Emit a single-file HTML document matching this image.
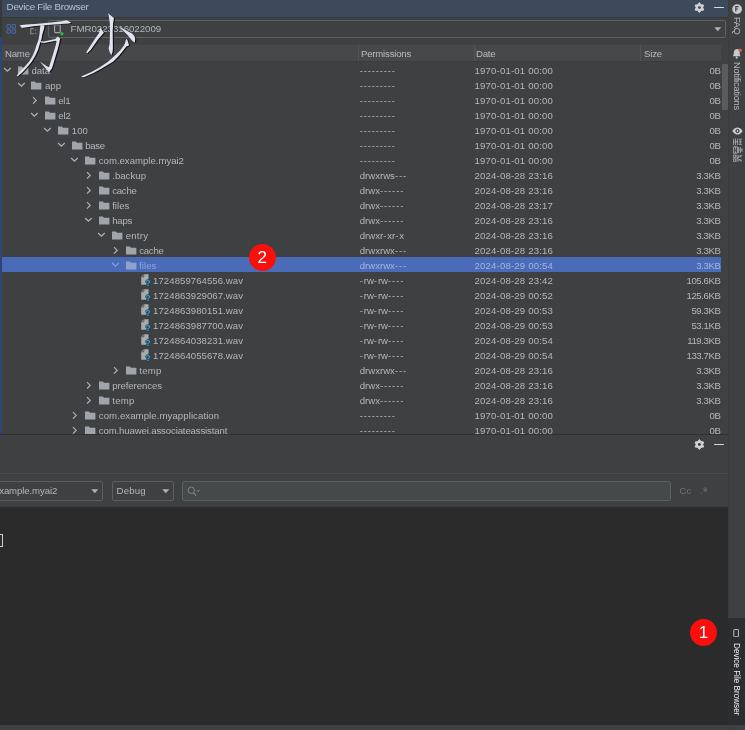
<!DOCTYPE html>
<html><head><meta charset="utf-8"><title>Device File Browser</title>
<style>
html,body{margin:0;padding:0;}
body{will-change:transform;width:745px;height:730px;overflow:hidden;background:#3e4042;position:relative;
 font-family:"Liberation Sans",sans-serif;font-size:9.6px;color:#b4b8bb;}
div,svg{position:absolute;}
.c{height:15px;line-height:17.0px;white-space:pre;color:#b4b8bb;}
.nm{letter-spacing:0px;}
.pm{letter-spacing:0px;}
.pm i{font-style:normal;letter-spacing:0.85px;}
.dash{letter-spacing:0.8px;}
.dt{letter-spacing:0.17px;}
.sz{text-align:right;letter-spacing:-0.4px;}
.sel{color:#a3b5e2;}
.sel.nm{color:#8ca3da;}
.selrow{left:2px;width:719px;height:15px;background:#4a6cb8;}
.ic{overflow:visible;}
#title{left:0;top:0;width:728px;height:17px;background:#3c4a5b;}
#title .t{left:6.6px;top:0;line-height:14.8px;height:16px;color:#b9c0cc;letter-spacing:-0.28px;font-size:9.8px;white-space:pre;}
#tb{left:0;top:17px;width:728px;height:27px;background:#3e4042;border-top:1px solid #35383a;box-sizing:border-box;}
#combo{left:48px;top:20px;width:678.4px;height:18px;box-sizing:border-box;border:1px solid #5e6162;border-radius:2px;background:#3e4042;}
#combo .t{left:21.5px;top:0;line-height:16.4px;height:16px;white-space:pre;letter-spacing:-0.02px;font-size:9.7px;color:#b4b8bb;}
#hdr{left:2px;top:44px;width:719px;height:18px;background:#46484a;box-sizing:border-box;border-top:1px solid #414345;border-bottom:1px solid #3a3c3e;}
#hdr .h{top:0;height:16px;line-height:18.4px;white-space:pre;color:#b8bcbf;letter-spacing:-0.2px;}
#hdr .sep{top:0px;width:1px;height:16px;background:#525456;}
#leftstrip{left:0;top:0;width:1.7px;height:434px;background:#2d4474;}
#leftstrip2{left:0;top:0;width:1.7px;height:36.5px;background:#343a3c;}
#rstrip{left:728px;top:0;width:17px;height:730px;background:#3e4042;border-left:1px solid #3a3c3e;box-sizing:border-box;}
.vt{white-space:pre;transform-origin:0 0;transform:rotate(90deg);color:#b9bcbf;font-size:9.3px;line-height:12px;height:12px;}
#vscroll{left:721px;top:44px;width:7px;height:390px;background:#3f4143;}
#vthumb{left:722.4px;top:63.5px;width:5.4px;height:46.5px;background:#595b5d;border-radius:1px;}
#p2{left:0;top:434px;width:729px;height:296px;background:#3e4042;border-top:1px solid #2f3133;box-sizing:border-box;}
#p2line{left:0;top:473px;width:729px;height:1px;background:#484b4d;}
#console{left:0;top:507.4px;width:729px;height:217.6px;background:#2b2b2b;}
.cb{box-sizing:border-box;border:1px solid #5b5e60;border-radius:2px;height:20px;top:481px;background:#3e4042;}
.cb .t{top:0;height:18px;line-height:18.6px;white-space:pre;color:#b4b8bb;letter-spacing:-0.1px;}
#search{left:182px;top:481px;width:489px;height:20px;box-sizing:border-box;border:1px solid #5a6261;border-radius:2px;background:#45494a;}
#bottombar{left:0;top:725px;width:729px;height:5px;background:#3f4143;}
.badge{width:27.2px;height:27.2px;border-radius:14px;background:#fb0f0c;color:#fff;text-align:center;font-size:17px;line-height:27.6px;}
#dfbtab{left:728px;top:617.5px;width:17px;height:107.5px;background:#2c2d2e;}
</style></head>
<body>
<div id="title"><div class="t">Device File Browser</div>
 <svg style="left:0;top:0" width="745" height="730" viewBox="0 0 745 730"><path d="M699.40 2.60 L701.07 4.70 L703.73 5.10 L702.75 7.60 L703.73 10.10 L701.07 10.50 L699.40 12.60 L697.73 10.50 L695.07 10.10 L696.05 7.60 L695.07 5.10 L697.73 4.70Z" fill="#cfd1d3" stroke="#cfd1d3" stroke-width="0.9" stroke-linejoin="round"/><circle cx="699.4" cy="7.6" r="1.45" fill="#3c4a5b"/></svg>
 <div style="left:714.4px;top:6.8px;width:9.3px;height:1.7px;background:#d6d8da;border-radius:0.6px"></div>
</div>
<div id="tb"></div>
<svg style="left:5.8px;top:24px" width="10.4" height="9.8" viewBox="0 0 13 13"><g fill="none" stroke="#4c71ba" stroke-width="1.15"><rect x="0.8" y="0.8" width="4.6" height="4.6" rx="0.25"/><rect x="7.6" y="0.8" width="4.6" height="4.6" rx="0.25"/><rect x="0.8" y="7.6" width="4.6" height="4.6" rx="0.25"/><rect x="7.6" y="7.6" width="4.6" height="4.6" rx="0.25"/></g></svg>
<svg style="left:29.8px;top:27.6px" width="8" height="7" viewBox="0 0 8 7"><path d="M3.9 0.6H0.8v5.2h3.1" fill="none" stroke="#8a8e92" stroke-width="1.1"/><rect x="5.2" y="1.6" width="1.1" height="1.2" fill="#8a8e92"/><rect x="5.2" y="4.8" width="1.1" height="1.2" fill="#8a8e92"/></svg>
<div id="combo">
 <svg style="left:5px;top:2.9px" width="12" height="13" viewBox="0 0 12 13"><rect x="0.6" y="0.6" width="5.6" height="8.0" rx="0.8" fill="none" stroke="#9ea4a8" stroke-width="1.1"/><circle cx="7.9" cy="9.7" r="1.75" fill="#2fbf3a" stroke="#256f2c" stroke-width="0.5"/></svg>
 <div class="t">FMR0223316022009</div>
 <svg style="left:665px;top:6px" width="8" height="5" viewBox="0 0 8 5"><path d="M0.3 0.3h7L3.8 4.2z" fill="#aeb2b5"/></svg>
</div>
<div id="hdr">
 <div class="h" style="left:3px">Name</div>
 <div class="sep" style="left:356px"></div><div class="h" style="left:359px">Permissions</div>
 <div class="sep" style="left:471.6px"></div><div class="h" style="left:474px">Date</div>
 <div class="sep" style="left:638px"></div><div class="h" style="left:642px">Size</div>
</div>
<div id="vscroll"></div><div id="vthumb"></div>
<svg class="ic" style="left:3.0px;top:66.7px" width="9" height="6" viewBox="0 0 9 6"><path d="M1.1 1 4.4 4.2 7.7 1" fill="none" stroke="#b0b4b8" stroke-width="1.2"/></svg>
<svg class="ic" style="left:17.9px;top:65.7px" width="10.6" height="8.7" viewBox="0 0 11 9"><path d="M0 0.4h3.9l1.3 1.5h5.6v6.9h-10.8z" fill="#9fa5aa"/></svg>
<div class="c nm" style="left:31.4px;top:62px;letter-spacing:0.0px">data</div>
<div class="c pm dash" style="left:359.7px;top:62px">---------</div>
<div class="c dt" style="left:474.6px;top:62px">1970-01-01 00:00</div>
<div class="c sz" style="left:640px;width:80.5px;top:62px">0B</div>
<svg class="ic" style="left:16.5px;top:81.7px" width="9" height="6" viewBox="0 0 9 6"><path d="M1.1 1 4.4 4.2 7.7 1" fill="none" stroke="#b0b4b8" stroke-width="1.2"/></svg>
<svg class="ic" style="left:31.4px;top:80.7px" width="10.6" height="8.7" viewBox="0 0 11 9"><path d="M0 0.4h3.9l1.3 1.5h5.6v6.9h-10.8z" fill="#9fa5aa"/></svg>
<div class="c nm" style="left:44.9px;top:77px;letter-spacing:0.09px">app</div>
<div class="c pm dash" style="left:359.7px;top:77px">---------</div>
<div class="c dt" style="left:474.6px;top:77px">1970-01-01 00:00</div>
<div class="c sz" style="left:640px;width:80.5px;top:77px">0B</div>
<svg class="ic" style="left:31.7px;top:95.8px" width="6" height="9" viewBox="0 0 6 9"><path d="M1 1.1 4.2 4.4 1 7.7" fill="none" stroke="#b0b4b8" stroke-width="1.2"/></svg>
<svg class="ic" style="left:44.8px;top:95.7px" width="10.6" height="8.7" viewBox="0 0 11 9"><path d="M0 0.4h3.9l1.3 1.5h5.6v6.9h-10.8z" fill="#9fa5aa"/></svg>
<div class="c nm" style="left:58.3px;top:92px;letter-spacing:-0.3px">el1</div>
<div class="c pm dash" style="left:359.7px;top:92px">---------</div>
<div class="c dt" style="left:474.6px;top:92px">1970-01-01 00:00</div>
<div class="c sz" style="left:640px;width:80.5px;top:92px">0B</div>
<svg class="ic" style="left:29.9px;top:111.7px" width="9" height="6" viewBox="0 0 9 6"><path d="M1.1 1 4.4 4.2 7.7 1" fill="none" stroke="#b0b4b8" stroke-width="1.2"/></svg>
<svg class="ic" style="left:44.8px;top:110.7px" width="10.6" height="8.7" viewBox="0 0 11 9"><path d="M0 0.4h3.9l1.3 1.5h5.6v6.9h-10.8z" fill="#9fa5aa"/></svg>
<div class="c nm" style="left:58.3px;top:107px;letter-spacing:-0.1px">el2</div>
<div class="c pm dash" style="left:359.7px;top:107px">---------</div>
<div class="c dt" style="left:474.6px;top:107px">1970-01-01 00:00</div>
<div class="c sz" style="left:640px;width:80.5px;top:107px">0B</div>
<svg class="ic" style="left:43.4px;top:126.7px" width="9" height="6" viewBox="0 0 9 6"><path d="M1.1 1 4.4 4.2 7.7 1" fill="none" stroke="#b0b4b8" stroke-width="1.2"/></svg>
<svg class="ic" style="left:58.3px;top:125.7px" width="10.6" height="8.7" viewBox="0 0 11 9"><path d="M0 0.4h3.9l1.3 1.5h5.6v6.9h-10.8z" fill="#9fa5aa"/></svg>
<div class="c nm" style="left:71.8px;top:122px;letter-spacing:0.03px">100</div>
<div class="c pm dash" style="left:359.7px;top:122px">---------</div>
<div class="c dt" style="left:474.6px;top:122px">1970-01-01 00:00</div>
<div class="c sz" style="left:640px;width:80.5px;top:122px">0B</div>
<svg class="ic" style="left:56.9px;top:141.7px" width="9" height="6" viewBox="0 0 9 6"><path d="M1.1 1 4.4 4.2 7.7 1" fill="none" stroke="#b0b4b8" stroke-width="1.2"/></svg>
<svg class="ic" style="left:71.8px;top:140.7px" width="10.6" height="8.7" viewBox="0 0 11 9"><path d="M0 0.4h3.9l1.3 1.5h5.6v6.9h-10.8z" fill="#9fa5aa"/></svg>
<div class="c nm" style="left:85.3px;top:137px;letter-spacing:-0.33px">base</div>
<div class="c pm dash" style="left:359.7px;top:137px">---------</div>
<div class="c dt" style="left:474.6px;top:137px">1970-01-01 00:00</div>
<div class="c sz" style="left:640px;width:80.5px;top:137px">0B</div>
<svg class="ic" style="left:70.4px;top:156.7px" width="9" height="6" viewBox="0 0 9 6"><path d="M1.1 1 4.4 4.2 7.7 1" fill="none" stroke="#b0b4b8" stroke-width="1.2"/></svg>
<svg class="ic" style="left:85.2px;top:155.7px" width="10.6" height="8.7" viewBox="0 0 11 9"><path d="M0 0.4h3.9l1.3 1.5h5.6v6.9h-10.8z" fill="#9fa5aa"/></svg>
<div class="c nm" style="left:98.8px;top:152px;letter-spacing:-0.01px">com.example.myai2</div>
<div class="c pm dash" style="left:359.7px;top:152px">---------</div>
<div class="c dt" style="left:474.6px;top:152px">1970-01-01 00:00</div>
<div class="c sz" style="left:640px;width:80.5px;top:152px">0B</div>
<svg class="ic" style="left:85.6px;top:170.8px" width="6" height="9" viewBox="0 0 6 9"><path d="M1 1.1 4.2 4.4 1 7.7" fill="none" stroke="#b0b4b8" stroke-width="1.2"/></svg>
<svg class="ic" style="left:98.7px;top:170.7px" width="10.6" height="8.7" viewBox="0 0 11 9"><path d="M0 0.4h3.9l1.3 1.5h5.6v6.9h-10.8z" fill="#9fa5aa"/></svg>
<div class="c nm" style="left:112.2px;top:167px;letter-spacing:0.03px">.backup</div>
<div class="c pm" style="left:359.7px;top:167px">drwxrws<i>-</i><i>-</i><i>-</i></div>
<div class="c dt" style="left:474.6px;top:167px">2024-08-28 23:16</div>
<div class="c sz" style="left:640px;width:80.5px;top:167px">3.3KB</div>
<svg class="ic" style="left:85.6px;top:185.8px" width="6" height="9" viewBox="0 0 6 9"><path d="M1 1.1 4.2 4.4 1 7.7" fill="none" stroke="#b0b4b8" stroke-width="1.2"/></svg>
<svg class="ic" style="left:98.7px;top:185.7px" width="10.6" height="8.7" viewBox="0 0 11 9"><path d="M0 0.4h3.9l1.3 1.5h5.6v6.9h-10.8z" fill="#9fa5aa"/></svg>
<div class="c nm" style="left:112.2px;top:182px;letter-spacing:-0.24px">cache</div>
<div class="c pm" style="left:359.7px;top:182px">drwx<i>-</i><i>-</i><i>-</i><i>-</i><i>-</i><i>-</i></div>
<div class="c dt" style="left:474.6px;top:182px">2024-08-28 23:16</div>
<div class="c sz" style="left:640px;width:80.5px;top:182px">3.3KB</div>
<svg class="ic" style="left:85.6px;top:200.8px" width="6" height="9" viewBox="0 0 6 9"><path d="M1 1.1 4.2 4.4 1 7.7" fill="none" stroke="#b0b4b8" stroke-width="1.2"/></svg>
<svg class="ic" style="left:98.7px;top:200.7px" width="10.6" height="8.7" viewBox="0 0 11 9"><path d="M0 0.4h3.9l1.3 1.5h5.6v6.9h-10.8z" fill="#9fa5aa"/></svg>
<div class="c nm" style="left:112.2px;top:197px;letter-spacing:0.01px">files</div>
<div class="c pm" style="left:359.7px;top:197px">drwx<i>-</i><i>-</i><i>-</i><i>-</i><i>-</i><i>-</i></div>
<div class="c dt" style="left:474.6px;top:197px">2024-08-28 23:17</div>
<div class="c sz" style="left:640px;width:80.5px;top:197px">3.3KB</div>
<svg class="ic" style="left:83.8px;top:216.7px" width="9" height="6" viewBox="0 0 9 6"><path d="M1.1 1 4.4 4.2 7.7 1" fill="none" stroke="#b0b4b8" stroke-width="1.2"/></svg>
<svg class="ic" style="left:98.7px;top:215.7px" width="10.6" height="8.7" viewBox="0 0 11 9"><path d="M0 0.4h3.9l1.3 1.5h5.6v6.9h-10.8z" fill="#9fa5aa"/></svg>
<div class="c nm" style="left:112.2px;top:212px;letter-spacing:-0.2px">haps</div>
<div class="c pm" style="left:359.7px;top:212px">drwx<i>-</i><i>-</i><i>-</i><i>-</i><i>-</i><i>-</i></div>
<div class="c dt" style="left:474.6px;top:212px">2024-08-28 23:16</div>
<div class="c sz" style="left:640px;width:80.5px;top:212px">3.3KB</div>
<svg class="ic" style="left:97.3px;top:231.7px" width="9" height="6" viewBox="0 0 9 6"><path d="M1.1 1 4.4 4.2 7.7 1" fill="none" stroke="#b0b4b8" stroke-width="1.2"/></svg>
<svg class="ic" style="left:112.2px;top:230.7px" width="10.6" height="8.7" viewBox="0 0 11 9"><path d="M0 0.4h3.9l1.3 1.5h5.6v6.9h-10.8z" fill="#9fa5aa"/></svg>
<div class="c nm" style="left:125.7px;top:227px;letter-spacing:0.23px">entry</div>
<div class="c pm" style="left:359.7px;top:227px">drwxr<i>-</i>xr<i>-</i>x</div>
<div class="c dt" style="left:474.6px;top:227px">2024-08-28 23:16</div>
<div class="c sz" style="left:640px;width:80.5px;top:227px">3.3KB</div>
<svg class="ic" style="left:112.6px;top:245.8px" width="6" height="9" viewBox="0 0 6 9"><path d="M1 1.1 4.2 4.4 1 7.7" fill="none" stroke="#b0b4b8" stroke-width="1.2"/></svg>
<svg class="ic" style="left:125.7px;top:245.7px" width="10.6" height="8.7" viewBox="0 0 11 9"><path d="M0 0.4h3.9l1.3 1.5h5.6v6.9h-10.8z" fill="#9fa5aa"/></svg>
<div class="c nm" style="left:139.2px;top:242px;letter-spacing:-0.24px">cache</div>
<div class="c pm" style="left:359.7px;top:242px">drwxrwx<i>-</i><i>-</i><i>-</i></div>
<div class="c dt" style="left:474.6px;top:242px">2024-08-28 23:16</div>
<div class="c sz" style="left:640px;width:80.5px;top:242px">3.3KB</div>
<div class="selrow" style="top:257px"></div>
<svg class="ic" style="left:110.8px;top:261.7px" width="9" height="6" viewBox="0 0 9 6"><path d="M1.1 1 4.4 4.2 7.7 1" fill="none" stroke="#7f9fe0" stroke-width="1.2"/></svg>
<svg class="ic" style="left:125.7px;top:260.7px" width="10.6" height="8.7" viewBox="0 0 11 9"><path d="M0 0.4h3.9l1.3 1.5h5.6v6.9h-10.8z" fill="#8fa3c8"/></svg>
<div class="c sel nm" style="left:139.2px;top:257px;letter-spacing:0.01px">files</div>
<div class="c sel pm" style="left:359.7px;top:257px">drwxrwx<i>-</i><i>-</i><i>-</i></div>
<div class="c sel dt" style="left:474.6px;top:257px">2024-08-29 00:54</div>
<div class="c sel sz" style="left:640px;width:80.5px;top:257px">3.3KB</div>
<svg class="ic" style="left:140.3px;top:274.4px" width="13" height="12" viewBox="0 0 13 12"><path d="M1.2 2.8 3.8 0.3h4.7v6.2h-2v4.3H1.2z" fill="#a6abaf"/><path d="M1.2 2.8h2.6V0.3" fill="none" stroke="#3c3f41" stroke-width="0.7"/><text x="5.6" y="11.7" font-family="Liberation Sans" font-weight="bold" font-size="8.5" fill="#39a3db" stroke="#23414f" stroke-width="1.3" paint-order="stroke">?</text></svg>
<div class="c nm" style="left:153.1px;top:272px;letter-spacing:0.05px">1724859764556.wav</div>
<div class="c pm" style="left:359.7px;top:272px"><i>-</i>rw<i>-</i>rw<i>-</i><i>-</i><i>-</i><i>-</i></div>
<div class="c dt" style="left:474.6px;top:272px">2024-08-28 23:42</div>
<div class="c sz" style="left:640px;width:80.5px;top:272px">105.6KB</div>
<svg class="ic" style="left:140.3px;top:289.4px" width="13" height="12" viewBox="0 0 13 12"><path d="M1.2 2.8 3.8 0.3h4.7v6.2h-2v4.3H1.2z" fill="#a6abaf"/><path d="M1.2 2.8h2.6V0.3" fill="none" stroke="#3c3f41" stroke-width="0.7"/><text x="5.6" y="11.7" font-family="Liberation Sans" font-weight="bold" font-size="8.5" fill="#39a3db" stroke="#23414f" stroke-width="1.3" paint-order="stroke">?</text></svg>
<div class="c nm" style="left:153.1px;top:287px;letter-spacing:0.05px">1724863929067.wav</div>
<div class="c pm" style="left:359.7px;top:287px"><i>-</i>rw<i>-</i>rw<i>-</i><i>-</i><i>-</i><i>-</i></div>
<div class="c dt" style="left:474.6px;top:287px">2024-08-29 00:52</div>
<div class="c sz" style="left:640px;width:80.5px;top:287px">125.6KB</div>
<svg class="ic" style="left:140.3px;top:304.4px" width="13" height="12" viewBox="0 0 13 12"><path d="M1.2 2.8 3.8 0.3h4.7v6.2h-2v4.3H1.2z" fill="#a6abaf"/><path d="M1.2 2.8h2.6V0.3" fill="none" stroke="#3c3f41" stroke-width="0.7"/><text x="5.6" y="11.7" font-family="Liberation Sans" font-weight="bold" font-size="8.5" fill="#39a3db" stroke="#23414f" stroke-width="1.3" paint-order="stroke">?</text></svg>
<div class="c nm" style="left:153.1px;top:302px;letter-spacing:0.05px">1724863980151.wav</div>
<div class="c pm" style="left:359.7px;top:302px"><i>-</i>rw<i>-</i>rw<i>-</i><i>-</i><i>-</i><i>-</i></div>
<div class="c dt" style="left:474.6px;top:302px">2024-08-29 00:53</div>
<div class="c sz" style="left:640px;width:80.5px;top:302px">59.3KB</div>
<svg class="ic" style="left:140.3px;top:319.4px" width="13" height="12" viewBox="0 0 13 12"><path d="M1.2 2.8 3.8 0.3h4.7v6.2h-2v4.3H1.2z" fill="#a6abaf"/><path d="M1.2 2.8h2.6V0.3" fill="none" stroke="#3c3f41" stroke-width="0.7"/><text x="5.6" y="11.7" font-family="Liberation Sans" font-weight="bold" font-size="8.5" fill="#39a3db" stroke="#23414f" stroke-width="1.3" paint-order="stroke">?</text></svg>
<div class="c nm" style="left:153.1px;top:317px;letter-spacing:0.05px">1724863987700.wav</div>
<div class="c pm" style="left:359.7px;top:317px"><i>-</i>rw<i>-</i>rw<i>-</i><i>-</i><i>-</i><i>-</i></div>
<div class="c dt" style="left:474.6px;top:317px">2024-08-29 00:53</div>
<div class="c sz" style="left:640px;width:80.5px;top:317px">53.1KB</div>
<svg class="ic" style="left:140.3px;top:334.4px" width="13" height="12" viewBox="0 0 13 12"><path d="M1.2 2.8 3.8 0.3h4.7v6.2h-2v4.3H1.2z" fill="#a6abaf"/><path d="M1.2 2.8h2.6V0.3" fill="none" stroke="#3c3f41" stroke-width="0.7"/><text x="5.6" y="11.7" font-family="Liberation Sans" font-weight="bold" font-size="8.5" fill="#39a3db" stroke="#23414f" stroke-width="1.3" paint-order="stroke">?</text></svg>
<div class="c nm" style="left:153.1px;top:332px;letter-spacing:0.05px">1724864038231.wav</div>
<div class="c pm" style="left:359.7px;top:332px"><i>-</i>rw<i>-</i>rw<i>-</i><i>-</i><i>-</i><i>-</i></div>
<div class="c dt" style="left:474.6px;top:332px">2024-08-29 00:54</div>
<div class="c sz" style="left:640px;width:80.5px;top:332px">119.3KB</div>
<svg class="ic" style="left:140.3px;top:349.4px" width="13" height="12" viewBox="0 0 13 12"><path d="M1.2 2.8 3.8 0.3h4.7v6.2h-2v4.3H1.2z" fill="#a6abaf"/><path d="M1.2 2.8h2.6V0.3" fill="none" stroke="#3c3f41" stroke-width="0.7"/><text x="5.6" y="11.7" font-family="Liberation Sans" font-weight="bold" font-size="8.5" fill="#39a3db" stroke="#23414f" stroke-width="1.3" paint-order="stroke">?</text></svg>
<div class="c nm" style="left:153.1px;top:347px;letter-spacing:0.05px">1724864055678.wav</div>
<div class="c pm" style="left:359.7px;top:347px"><i>-</i>rw<i>-</i>rw<i>-</i><i>-</i><i>-</i><i>-</i></div>
<div class="c dt" style="left:474.6px;top:347px">2024-08-29 00:54</div>
<div class="c sz" style="left:640px;width:80.5px;top:347px">133.7KB</div>
<svg class="ic" style="left:112.6px;top:365.9px" width="6" height="9" viewBox="0 0 6 9"><path d="M1 1.1 4.2 4.4 1 7.7" fill="none" stroke="#b0b4b8" stroke-width="1.2"/></svg>
<svg class="ic" style="left:125.7px;top:365.7px" width="10.6" height="8.7" viewBox="0 0 11 9"><path d="M0 0.4h3.9l1.3 1.5h5.6v6.9h-10.8z" fill="#9fa5aa"/></svg>
<div class="c nm" style="left:139.2px;top:362px;letter-spacing:0.29px">temp</div>
<div class="c pm" style="left:359.7px;top:362px">drwxrwx<i>-</i><i>-</i><i>-</i></div>
<div class="c dt" style="left:474.6px;top:362px">2024-08-28 23:16</div>
<div class="c sz" style="left:640px;width:80.5px;top:362px">3.3KB</div>
<svg class="ic" style="left:85.6px;top:380.9px" width="6" height="9" viewBox="0 0 6 9"><path d="M1 1.1 4.2 4.4 1 7.7" fill="none" stroke="#b0b4b8" stroke-width="1.2"/></svg>
<svg class="ic" style="left:98.7px;top:380.7px" width="10.6" height="8.7" viewBox="0 0 11 9"><path d="M0 0.4h3.9l1.3 1.5h5.6v6.9h-10.8z" fill="#9fa5aa"/></svg>
<div class="c nm" style="left:112.2px;top:377px;letter-spacing:-0.09px">preferences</div>
<div class="c pm" style="left:359.7px;top:377px">drwx<i>-</i><i>-</i><i>-</i><i>-</i><i>-</i><i>-</i></div>
<div class="c dt" style="left:474.6px;top:377px">2024-08-28 23:16</div>
<div class="c sz" style="left:640px;width:80.5px;top:377px">3.3KB</div>
<svg class="ic" style="left:85.6px;top:395.9px" width="6" height="9" viewBox="0 0 6 9"><path d="M1 1.1 4.2 4.4 1 7.7" fill="none" stroke="#b0b4b8" stroke-width="1.2"/></svg>
<svg class="ic" style="left:98.7px;top:395.7px" width="10.6" height="8.7" viewBox="0 0 11 9"><path d="M0 0.4h3.9l1.3 1.5h5.6v6.9h-10.8z" fill="#9fa5aa"/></svg>
<div class="c nm" style="left:112.2px;top:392px;letter-spacing:0.29px">temp</div>
<div class="c pm" style="left:359.7px;top:392px">drwx<i>-</i><i>-</i><i>-</i><i>-</i><i>-</i><i>-</i></div>
<div class="c dt" style="left:474.6px;top:392px">2024-08-28 23:16</div>
<div class="c sz" style="left:640px;width:80.5px;top:392px">3.3KB</div>
<svg class="ic" style="left:72.2px;top:410.9px" width="6" height="9" viewBox="0 0 6 9"><path d="M1 1.1 4.2 4.4 1 7.7" fill="none" stroke="#b0b4b8" stroke-width="1.2"/></svg>
<svg class="ic" style="left:85.2px;top:410.7px" width="10.6" height="8.7" viewBox="0 0 11 9"><path d="M0 0.4h3.9l1.3 1.5h5.6v6.9h-10.8z" fill="#9fa5aa"/></svg>
<div class="c nm" style="left:98.8px;top:407px;letter-spacing:0.08px">com.example.myapplication</div>
<div class="c pm dash" style="left:359.7px;top:407px">---------</div>
<div class="c dt" style="left:474.6px;top:407px">1970-01-01 00:00</div>
<div class="c sz" style="left:640px;width:80.5px;top:407px">0B</div>
<svg class="ic" style="left:72.2px;top:425.9px" width="6" height="9" viewBox="0 0 6 9"><path d="M1 1.1 4.2 4.4 1 7.7" fill="none" stroke="#b0b4b8" stroke-width="1.2"/></svg>
<svg class="ic" style="left:85.2px;top:425.7px" width="10.6" height="8.7" viewBox="0 0 11 9"><path d="M0 0.4h3.9l1.3 1.5h5.6v6.9h-10.8z" fill="#9fa5aa"/></svg>
<div class="c nm" style="left:98.8px;top:422px;letter-spacing:-0.13px">com.huawei.associateassistant</div>
<div class="c pm dash" style="left:359.7px;top:422px">---------</div>
<div class="c dt" style="left:474.6px;top:422px">1970-01-01 00:00</div>
<div class="c sz" style="left:640px;width:80.5px;top:422px">0B</div>
<div id="leftstrip"></div><div id="leftstrip2"></div>

<div id="p2"></div>
<div id="p2line"></div>
<div id="console"></div>
<div id="bottombar"></div>
<svg style="left:0;top:0" width="745" height="730" viewBox="0 0 745 730"><path d="M699.40 439.50 L701.07 441.60 L703.73 442.00 L702.75 444.50 L703.73 447.00 L701.07 447.40 L699.40 449.50 L697.73 447.40 L695.07 447.00 L696.05 444.50 L695.07 442.00 L697.73 441.60Z" fill="#cfd1d3" stroke="#cfd1d3" stroke-width="0.9" stroke-linejoin="round"/><circle cx="699.4" cy="444.5" r="1.45" fill="#3d3f41"/></svg>
<div style="left:714.4px;top:443.7px;width:9.3px;height:1.7px;background:#d6d8da;border-radius:0.6px"></div>
<div class="cb" style="left:-20px;width:122.5px"><div class="t" style="left:18.2px">xample.myai2</div>
 <svg style="left:110px;top:7px" width="8" height="5" viewBox="0 0 8 5"><path d="M0.3 0.3h7L3.8 4.2z" fill="#aeb2b5"/></svg></div>
<div class="cb" style="left:112px;width:61.5px"><div class="t" style="left:3.6px;letter-spacing:0.15px">Debug</div>
 <svg style="left:49px;top:7px" width="8" height="5" viewBox="0 0 8 5"><path d="M0.3 0.3h7L3.8 4.2z" fill="#aeb2b5"/></svg></div>
<div id="search">
 <svg style="left:3.5px;top:3.5px" width="14" height="11" viewBox="0 0 14 11"><circle cx="4.3" cy="4.3" r="3.2" fill="none" stroke="#7e8689" stroke-width="1"/><path d="M6.6 6.8 9 9.6" stroke="#7e8689" stroke-width="1.1"/><path d="M9.6 4.2h3.2l-1.6 1.9z" fill="#7e8689"/></svg>
</div>
<div style="left:679.4px;top:484px;font-size:9.6px;line-height:14px;color:#6e7376;white-space:pre;letter-spacing:0.2px">Cc</div>
<div style="left:699.8px;top:484px;font-size:9.6px;line-height:14px;color:#6b7073;white-space:pre">.</div><div style="left:702.4px;top:483.6px;font-size:14px;line-height:17px;color:#6b7073;white-space:pre">*</div>
<div style="left:0;top:533.6px;width:3.2px;height:13.4px;border:1.1px solid #cfcfcf;border-left:none;box-sizing:border-box;background:#283033"></div>

<div id="rstrip"></div>
<div id="dfbtab"></div>
<!-- right strip contents -->
<svg style="left:731.8px;top:3.9px" width="10.2" height="10.2" viewBox="0 0 10 10"><circle cx="5" cy="5" r="4.8" fill="#c7cbcf"/><path d="M3.7 7.4V2.6h2.8M3.7 4.9h2.2" fill="none" stroke="#3c3f41" stroke-width="1.1"/></svg>
<div class="vt" style="left:743.2px;top:16.9px;letter-spacing:-0.45px">FAQ</div>
<svg style="left:732px;top:48px" width="11" height="12" viewBox="0 0 11 12"><path d="M4.3 1.6C2.4 2 1.9 3.6 1.9 5.2L1 8.2h7.4L7.6 5.2" fill="#c7cbcf"/><path d="M4.3 1.2a2.6 2.6 0 0 1 3.2 3.9H1.9C1.9 3.4 2.6 1.6 4.3 1.2z" fill="#c7cbcf"/><circle cx="4.7" cy="9.6" r="1.1" fill="#c7cbcf"/><circle cx="8.3" cy="2.3" r="1.7" fill="#e0524b"/></svg>
<div class="vt" style="left:743px;top:61.6px;letter-spacing:-0.2px">Notifications</div>
<svg style="left:731.5px;top:126.5px" width="11" height="8" viewBox="0 0 11 8"><path d="M0.3 4C2 1.2 3.8 0.4 5.5 0.4S9 1.2 10.7 4C9 6.8 7.2 7.6 5.5 7.6S2 6.8 0.3 4z" fill="#c7cbcf"/><circle cx="5.5" cy="4" r="2.1" fill="#3c3f41"/><circle cx="5.5" cy="4" r="0.9" fill="#c7cbcf"/></svg>
<svg style="left:732.6px;top:138.2px" width="10" height="25" viewBox="0 0 10 25"><g fill="none" stroke="#b3b6b9" stroke-width="0.95" opacity="0.85"><path transform="translate(0,0)" d="M0.4 0.5v6.6M2.5 0.5v6.6M4.6 0.5v6.6M0.4 3.8h4.2M5.8 1.2h3M5.8 6.4h3M7.3 1.2v5.2M6 3.8h2.8"/><path transform="translate(0,8.2)" d="M0.4 0.6v6.4M2.4 0.6v3M2.4 4.6v2.4M4.4 0.6v6.4M0.4 0.6h4M0.4 7h4M5.6 0.8v6M7.4 0.8v6M9 2v3.6M5.6 3.8h3.4"/><path transform="translate(0,16.4)" d="M0.4 0.6v2.6M2.6 0.6v2.6M0.4 0.6h2.2M0.4 3.2h2.2M0.4 4.4v2.6M2.6 4.4v2.6M0.4 4.4h2.2M0.4 7h2.2M4 0.4v7M4 3.8l4.8-3M4 3.8l4.8 3M5.8 0.6v2.4M7.8 0.8v2M5.8 4.8v2.4M7.8 4.8v2"/></g></svg>
<svg style="left:733.2px;top:628.8px" width="6.6" height="8.6" viewBox="0 0 7 10"><rect x="0.6" y="0.6" width="5.4" height="8.4" rx="0.6" fill="none" stroke="#d4d6d8" stroke-width="1"/></svg>
<div class="vt" style="left:743.2px;top:642.9px;color:#eceef0;font-size:9.2px;transform:rotate(90deg) scaleX(0.886)">Device File Browser</div>

<div class="badge" style="left:248.6px;top:243.7px">2</div>
<div class="badge" style="left:689.9px;top:618.8px">1</div>

<!-- watermark -->
<svg id="wm" style="left:0;top:0" width="160" height="90" viewBox="0 0 160 90">
<g fill="#08080c" opacity="0.85" transform="translate(1.1,0.55)">
<path d="M19.6 25.6 L21.5 24.9 L26.5 24.4 L35 24.1 L51 22.5 L62 21.3 L66.7 20.2 L71.2 22.6 L69.4 23.5 L60 24.0 L51 24.8 L35 26.1 L22 27.9Z"/>
<path d="M40.5 25.0 L40.0 28.7 L39.5 34 L38.6 39.5 L37.7 42 L36.9 44 L35.0 50 L32.5 56 L29.2 61.4 L24.6 66.7 L19.5 72.1 L16.6 75.9 L17.8 76.3 L22.7 72.1 L27.6 66.7 L31.9 61.4 L35.2 56 L38.0 50 L39.8 44 L40.4 42 L41.4 39.5 L42.4 34 L44.0 28.7 L44.5 25.4Z"/>
<path d="M40.1 41.0 L43.6 41.5 L55.4 39.0 L57.6 36.5 L60.2 38.6 L58.9 44.7 L57.5 50.1 L55.1 58 L53.3 64.2 L51.9 68.4 L49.0 72.3 L39.9 61.6 L46.9 66.3 L49.0 67.2 L49.9 64.2 L51.9 58 L54.3 50.1 L55.9 44.7 L56.6 41.2 L55.9 40.8 L44.1 43.1 L40.9 42.6Z"/>
<path d="M108.15 13.2 L114.0 18.1 L113.1 23.4 L112.7 31.5 L112.8 40 L112.9 48 L112.6 52 L111.5 55.1 L109.9 52.8 L108.6 48.5 L109.6 44 L109.8 40 L110.0 31.5 L110.0 26.1 L109.5 20.7 L108.7 15.4Z"/>
<path d="M100.4 27.6 L99.1 33 L94.5 39.4 L88.05 49.6 L86.2 52.6 L87.2 53.2 L90.7 50 L98 39.4 L103.9 32.7Z"/>
<path d="M118.4 26.2C122 28 128 31 132 33.6 134 35 135.2 37 135.2 39L134.9 42.5C133 41.5 131.5 40 130 38 127 34 123 30.5 118.4 26.2Z"/>
<path d="M126.55 38.9 L125.8 40 L125 43.2 L123.9 45.4 L122.0 48 L119.9 50.7 L114.5 56.1 L112.2 58 L108.0 61.7 L99.5 67.4 L91.4 72 L81.8 76.25 L81.3 76.9 L84 77.3 L93.6 73 L102.2 68.2 L111.3 62.8 L113.4 61.5 L118.8 56.1 L123.1 50.7 L125.2 48 L126.4 46.6 L129.0 45.4 L128.5 43.2 L127.4 40Z"/>
</g>
<g fill="#e1e4ef">
<path d="M19.6 25.6 L21.5 24.9 L26.5 24.4 L35 24.1 L51 22.5 L62 21.3 L66.7 20.2 L71.2 22.6 L69.4 23.5 L60 24.0 L51 24.8 L35 26.1 L22 27.9Z"/>
<path d="M40.5 25.0 L40.0 28.7 L39.5 34 L38.6 39.5 L37.7 42 L36.9 44 L35.0 50 L32.5 56 L29.2 61.4 L24.6 66.7 L19.5 72.1 L16.6 75.9 L17.8 76.3 L22.7 72.1 L27.6 66.7 L31.9 61.4 L35.2 56 L38.0 50 L39.8 44 L40.4 42 L41.4 39.5 L42.4 34 L44.0 28.7 L44.5 25.4Z"/>
<path d="M40.1 41.0 L43.6 41.5 L55.4 39.0 L57.6 36.5 L60.2 38.6 L58.9 44.7 L57.5 50.1 L55.1 58 L53.3 64.2 L51.9 68.4 L49.0 72.3 L39.9 61.6 L46.9 66.3 L49.0 67.2 L49.9 64.2 L51.9 58 L54.3 50.1 L55.9 44.7 L56.6 41.2 L55.9 40.8 L44.1 43.1 L40.9 42.6Z"/>
<path d="M108.15 13.2 L114.0 18.1 L113.1 23.4 L112.7 31.5 L112.8 40 L112.9 48 L112.6 52 L111.5 55.1 L109.9 52.8 L108.6 48.5 L109.6 44 L109.8 40 L110.0 31.5 L110.0 26.1 L109.5 20.7 L108.7 15.4Z"/>
<path d="M100.4 27.6 L99.1 33 L94.5 39.4 L88.05 49.6 L86.2 52.6 L87.2 53.2 L90.7 50 L98 39.4 L103.9 32.7Z"/>
<path d="M118.4 26.2C122 28 128 31 132 33.6 134 35 135.2 37 135.2 39L134.9 42.5C133 41.5 131.5 40 130 38 127 34 123 30.5 118.4 26.2Z"/>
<path d="M126.55 38.9 L125.8 40 L125 43.2 L123.9 45.4 L122.0 48 L119.9 50.7 L114.5 56.1 L112.2 58 L108.0 61.7 L99.5 67.4 L91.4 72 L81.8 76.25 L81.3 76.9 L84 77.3 L93.6 73 L102.2 68.2 L111.3 62.8 L113.4 61.5 L118.8 56.1 L123.1 50.7 L125.2 48 L126.4 46.6 L129.0 45.4 L128.5 43.2 L127.4 40Z"/>
</g>
</svg>
</body></html>
